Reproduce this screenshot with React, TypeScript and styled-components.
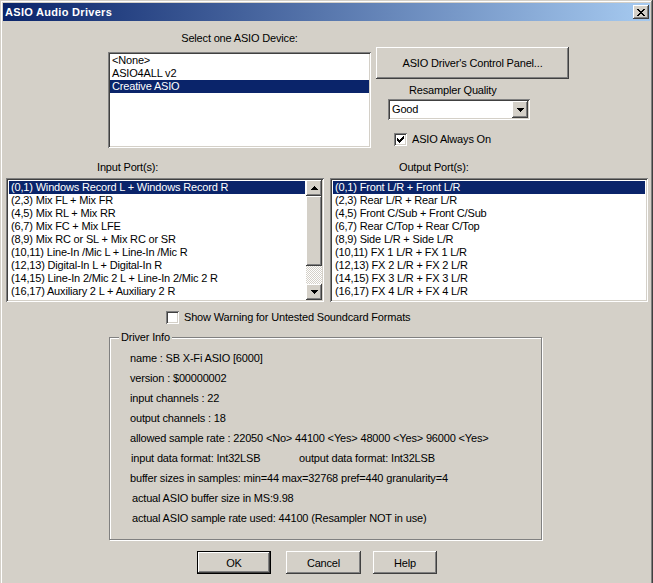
import styled, { createGlobalStyle, css } from "styled-components";

const face = "#d4d0c8";
const shadow = "#808080";
const darkShadow = "#404040";
const highlight = "#ffffff";
const selection = "#0a246a";

const GlobalStyle = createGlobalStyle`
  html, body {
    margin: 0;
    padding: 0;
    background: ${face};
    overflow: hidden;
  }
  body {
    font-family: "Liberation Sans", Arial, sans-serif;
    font-size: 11px;
    letter-spacing: -0.17px;
    color: #000;
  }
`;

const raised = css`
  background: ${face};
  box-shadow: inset -1px -1px ${darkShadow}, inset 1px 1px ${highlight},
    inset -2px -2px ${shadow}, inset 2px 2px ${face};
`;

const sunken = css`
  background: #fff;
  box-shadow: inset 1px 1px ${shadow}, inset -1px -1px ${highlight},
    inset 2px 2px ${darkShadow}, inset -2px -2px ${face};
`;

const Window = styled.div`
  box-sizing: border-box;
  width: 653px;
  height: 583px;
  padding: 3px 3px 0 3px;
  background: ${face};
  box-shadow: inset -1px 0 ${darkShadow}, inset 1px 1px ${face},
    inset -2px 0 ${shadow}, inset 2px 2px ${highlight};
  display: flex;
  flex-direction: column;
`;

const TitleBar = styled.div`
  height: 18px;
  display: flex;
  align-items: center;
  justify-content: space-between;
  padding: 0 1px 0 2px;
  background: linear-gradient(to right, #0a246a, #a6caf0);
  color: #fff;
  font-weight: bold;
  letter-spacing: 0.3px;
`;

const CloseButton = styled.div`
  ${raised};
  width: 16px;
  height: 14px;
  display: flex;
  align-items: center;
  justify-content: center;
`;

const TopRow = styled.div`
  display: flex;
  padding-left: 105px;
`;

const DeviceColumn = styled.div`
  width: 263px;
  display: flex;
  flex-direction: column;
`;

const Label = styled.div<{ $offset?: number; $center?: boolean }>`
  line-height: 13px;
  height: 13px;
  white-space: nowrap;
  padding-left: ${(p) => p.$offset ?? 0}px;
  text-align: ${(p) => (p.$center ? "center" : "left")};
`;

const ListBox = styled.div<{ $height: number }>`
  ${sunken};
  box-sizing: border-box;
  height: ${(p) => p.$height}px;
  padding: 2px;
  display: flex;
  overflow: hidden;
`;

const ItemArea = styled.div<{ $pad: number }>`
  flex: 1;
  padding: ${(p) => p.$pad}px;
`;

const Item = styled.div<{ $selected?: boolean }>`
  height: 13px;
  line-height: 13px;
  padding: 0 2px;
  white-space: nowrap;
  background: ${(p) => (p.$selected ? selection : "transparent")};
  color: ${(p) => (p.$selected ? "#fff" : "#000")};
`;

const RightColumn = styled.div`
  margin-left: 5px;
  padding-top: 26px;
  width: 193px;
  display: flex;
  flex-direction: column;
`;

const Button = styled.button<{ $width: number; $height?: number; $default?: boolean; $gap?: number }>`
  ${raised};
  border: none;
  margin: 0 0 0 ${(p) => p.$gap ?? 0}px;
  padding: 0;
  width: ${(p) => p.$width}px;
  height: ${(p) => p.$height ?? 23}px;
  font: inherit;
  letter-spacing: inherit;
  color: #000;
  ${(p) =>
    p.$default &&
    css`
      box-shadow: inset 0 0 0 1px #000, inset -2px -2px ${darkShadow},
        inset 2px 2px ${highlight}, inset -3px -3px ${shadow},
        inset 3px 3px ${face};
    `}
`;

const ResamplerBlock = styled.div`
  margin-left: 12px;
  width: 142px;
  display: flex;
  flex-direction: column;
`;

const ComboBox = styled.div`
  ${sunken};
  box-sizing: border-box;
  margin-top: 2px;
  height: 21px;
  padding: 2px;
  display: flex;
  align-items: center;
`;

const ComboText = styled.div`
  flex: 1;
  padding-left: 2px;
  line-height: 17px;
`;

const ArrowButton = styled.div<{ $height: number }>`
  ${raised};
  width: 16px;
  height: ${(p) => p.$height}px;
  display: flex;
  align-items: center;
  justify-content: center;
`;

const CheckRow = styled.div<{ $indent: number; $top: number }>`
  display: flex;
  align-items: center;
  gap: 5px;
  margin-top: ${(p) => p.$top}px;
  padding-left: ${(p) => p.$indent}px;
  height: 13px;
  line-height: 13px;
  white-space: nowrap;
`;

const CheckBox = styled.div`
  ${sunken};
  width: 13px;
  height: 13px;
  flex: none;
  display: flex;
  align-items: center;
  justify-content: center;
`;

const PortsRow = styled.div`
  margin-top: 13px;
  padding-left: 3px;
  display: grid;
  grid-template-columns: 318px 318px;
  column-gap: 6px;
`;

const PortColumn = styled.div`
  display: flex;
  flex-direction: column;
  gap: 4px;
`;

const ScrollBar = styled.div`
  width: 16px;
  display: flex;
  flex-direction: column;
`;

const Thumb = styled.div`
  ${raised};
  height: 70px;
`;

const Track = styled.div`
  flex: 1;
  background: repeating-conic-gradient(${highlight} 0 25%, ${face} 0 50%) 0 0 / 2px 2px;
`;

const GroupBox = styled.div`
  position: relative;
  margin: 13px 0 0 106px;
  box-sizing: border-box;
  width: 433px;
  height: 203px;
  border: 1px solid ${shadow};
  box-shadow: inset 1px 1px ${highlight}, 1px 1px ${highlight};
  padding: 10px 0 0 20px;
`;

const Legend = styled.span`
  position: absolute;
  top: -7px;
  left: 9px;
  padding: 0 2px;
  line-height: 13px;
  background: ${face};
`;

const InfoLine = styled.div<{ $indent?: number }>`
  line-height: 20px;
  height: 20px;
  white-space: nowrap;
  padding-left: ${(p) => p.$indent ?? 0}px;
`;

const InfoCell = styled.span`
  display: inline-block;
  width: 168px;
`;

const ButtonRow = styled.div`
  display: flex;
  margin-top: 11px;
  padding-left: 194px;
`;

const Pixels = styled.svg`
  display: block;
  shape-rendering: crispEdges;
`;

const CloseGlyph = () => (
  <Pixels width="8" height="7" viewBox="0 0 8 7">
    <path
      fill="#000"
      d="M0 0h2v1h-2z M6 0h2v1h-2z M1 1h2v1h-2z M5 1h2v1h-2z M2 2h4v1h-4z M3 3h2v1h-2z M2 4h4v1h-4z M1 5h2v1h-2z M5 5h2v1h-2z M0 6h2v1h-2z M6 6h2v1h-2z"
    />
  </Pixels>
);

const CheckGlyph = () => (
  <Pixels width="7" height="7" viewBox="0 0 7 7">
    <path
      fill="#000"
      d="M6 0h1v1h-1z M5 1h2v1h-2z M0 2h1v1h-1z M4 2h3v1h-3z M0 3h2v1h-2z M3 3h3v1h-3z M0 4h5v1h-5z M1 5h3v1h-3z M2 6h1v1h-1z"
    />
  </Pixels>
);

const Arrow = ({ up }: { up?: boolean }) => (
  <Pixels width="7" height="4" viewBox="0 0 7 4">
    <path
      fill="#000"
      d={
        up
          ? "M3 0h1v1h-1z M2 1h3v1h-3z M1 2h5v1h-5z M0 3h7v1h-7z"
          : "M0 0h7v1h-7z M1 1h5v1h-5z M2 2h3v1h-3z M3 3h1v1h-1z"
      }
    />
  </Pixels>
);

const devices = ["<None>", "ASIO4ALL v2", "Creative ASIO"];

const inputPorts = [
  "(0,1) Windows Record L + Windows Record R",
  "(2,3) Mix FL + Mix FR",
  "(4,5) Mix RL + Mix RR",
  "(6,7) Mix FC + Mix LFE",
  "(8,9) Mix RC or SL + Mix RC or SR",
  "(10,11) Line-In /Mic L + Line-In /Mic R",
  "(12,13) Digital-In L + Digital-In R",
  "(14,15) Line-In 2/Mic 2 L + Line-In 2/Mic 2 R",
  "(16,17) Auxiliary 2 L + Auxiliary 2 R",
];

const outputPorts = [
  "(0,1) Front L/R + Front L/R",
  "(2,3) Rear L/R + Rear L/R",
  "(4,5) Front C/Sub + Front C/Sub",
  "(6,7) Rear C/Top + Rear C/Top",
  "(8,9) Side L/R + Side L/R",
  "(10,11) FX 1 L/R + FX 1 L/R",
  "(12,13) FX 2 L/R + FX 2 L/R",
  "(14,15) FX 3 L/R + FX 3 L/R",
  "(16,17) FX 4 L/R + FX 4 L/R",
];

const info = [
  "name : SB X-Fi ASIO [6000]",
  "version : $00000002",
  "input channels : 22",
  "output channels : 18",
  "allowed sample rate : 22050 <No> 44100 <Yes> 48000 <Yes> 96000 <Yes>",
];

const App = () => {
  return (
    <>
      <GlobalStyle />
      <Window>
        <TitleBar>
          <span>ASIO Audio Drivers</span>
          <CloseButton>
            <CloseGlyph />
          </CloseButton>
        </TitleBar>

        <TopRow>
          <DeviceColumn>
            <Label $center style={{ marginTop: 11, marginBottom: 7 }}>
              Select one ASIO Device:
            </Label>
            <ListBox $height={96}>
              <ItemArea $pad={0}>
                {devices.map((d, i) => (
                  <Item key={d} $selected={i === 2}>
                    {d}
                  </Item>
                ))}
              </ItemArea>
            </ListBox>
          </DeviceColumn>

          <RightColumn>
            <Button $width={193} $height={32}>
              ASIO Driver's Control Panel...
            </Button>
            <ResamplerBlock>
              <Label $offset={21} style={{ marginTop: 5 }}>
                Resampler Quality
              </Label>
              <ComboBox>
                <ComboText>Good</ComboText>
                <ArrowButton $height={17}>
                  <Arrow />
                </ArrowButton>
              </ComboBox>
              <CheckRow $indent={6} $top={13}>
                <CheckBox>
                  <CheckGlyph />
                </CheckBox>
                ASIO Always On
              </CheckRow>
            </ResamplerBlock>
          </RightColumn>
        </TopRow>

        <PortsRow>
          <PortColumn>
            <Label $offset={91}>Input Port(s):</Label>
            <ListBox $height={124}>
              <ItemArea $pad={1}>
                {inputPorts.map((p, i) => (
                  <Item key={p} $selected={i === 0}>
                    {p}
                  </Item>
                ))}
              </ItemArea>
              <ScrollBar>
                <ArrowButton $height={16}>
                  <Arrow up />
                </ArrowButton>
                <Thumb />
                <Track />
                <ArrowButton $height={16}>
                  <Arrow />
                </ArrowButton>
              </ScrollBar>
            </ListBox>
          </PortColumn>
          <PortColumn>
            <Label $offset={69}>Output Port(s):</Label>
            <ListBox $height={124}>
              <ItemArea $pad={1}>
                {outputPorts.map((p, i) => (
                  <Item key={p} $selected={i === 0}>
                    {p}
                  </Item>
                ))}
              </ItemArea>
            </ListBox>
          </PortColumn>
        </PortsRow>

        <CheckRow $indent={163} $top={9}>
          <CheckBox />
          Show Warning for Untested Soundcard Formats
        </CheckRow>

        <GroupBox>
          <Legend>Driver Info</Legend>
          {info.map((line) => (
            <InfoLine key={line}>{line}</InfoLine>
          ))}
          <InfoLine $indent={1}>
            <InfoCell>input data format: Int32LSB</InfoCell>
            output data format: Int32LSB
          </InfoLine>
          <InfoLine>buffer sizes in samples: min=44 max=32768 pref=440 granularity=4</InfoLine>
          <InfoLine $indent={2}>actual ASIO buffer size in MS:9.98</InfoLine>
          <InfoLine $indent={2}>actual ASIO sample rate used: 44100 (Resampler NOT in use)</InfoLine>
        </GroupBox>

        <ButtonRow>
          <Button $width={74} $default>
            OK
          </Button>
          <Button $width={75} $gap={15}>
            Cancel
          </Button>
          <Button $width={64} $gap={12}>
            Help
          </Button>
        </ButtonRow>
      </Window>
    </>
  );
};

export default App;
